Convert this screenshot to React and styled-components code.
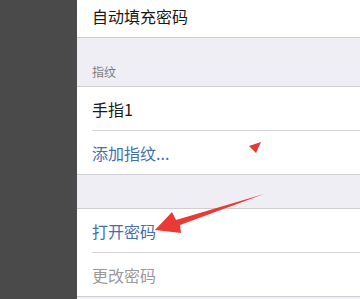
import React from "react";
import styled, { createGlobalStyle } from "styled-components";

const Global = createGlobalStyle`
	html, body {
		margin: 0;
		padding: 0;
		width: 360px;
		height: 299px;
		overflow: hidden;
		background: #efeef5;
		font-family: "Noto Sans CJK SC", "Noto Sans", sans-serif;
	}
`;

const Screen = styled.div`
	position: relative;
	display: flex;
	width: 360px;
	height: 299px;
	overflow: hidden;
`;

const SideDim = styled.div`
	width: 77px;
	flex-shrink: 0;
	background: #4a4a4a;
`;

const Settings = styled.div`
	flex: 1;
	display: flex;
	flex-direction: column;
	background: #efeef5;
	margin-top: -6px;
`;

const Group = styled.div`
	background: #fff;
	border-top: ${({ top }) => (top ? "1px solid #cfced3" : "none")};
	border-bottom: 1px solid #cfced3;
`;

const Row = styled.div`
	height: 43px;
	display: flex;
	align-items: center;
	padding-left: 15px;
	font-size: 16px;
	color: ${({ tone }) =>
		tone === "link" ? "#4470b0" : tone === "muted" ? "#9a9a9e" : "#1a1a1a"};

	& + & {
		border-top: 1px solid #d4d3d8;
		margin-left: 15px;
		padding-left: 0;
	}
`;

const Spacer = styled.div`
	height: ${({ h }) => h}px;
	display: flex;
	align-items: flex-end;
	padding: 0 15px 6px;
	box-sizing: border-box;
	font-size: 12px;
	color: #7c7c80;
`;

const Arrows = styled.svg`
	position: absolute;
	left: 0;
	top: 0;
	pointer-events: none;
`;

export default function App() {
	return (
		<Screen>
			<Global />
			<SideDim />
			<Settings>
				<Group>
					<Row>自动填充密码</Row>
				</Group>
				<Spacer h={48}>指纹</Spacer>
				<Group top>
					<Row>手指1</Row>
					<Row tone="link">添加指纹...</Row>
				</Group>
				<Spacer h={33} />
				<Group top>
					<Row tone="link">打开密码</Row>
					<Row tone="muted">更改密码</Row>
				</Group>
			</Settings>
			<Arrows width="360" height="299" viewBox="0 0 360 299">
				<polygon points="249,146 261,142 256,153" fill="#e53935" />
				<polygon
					points="264,194 180,225 181,233 155,230 172,212 176,220"
					fill="#ea3a36"
				/>
			</Arrows>
		</Screen>
	);
}
